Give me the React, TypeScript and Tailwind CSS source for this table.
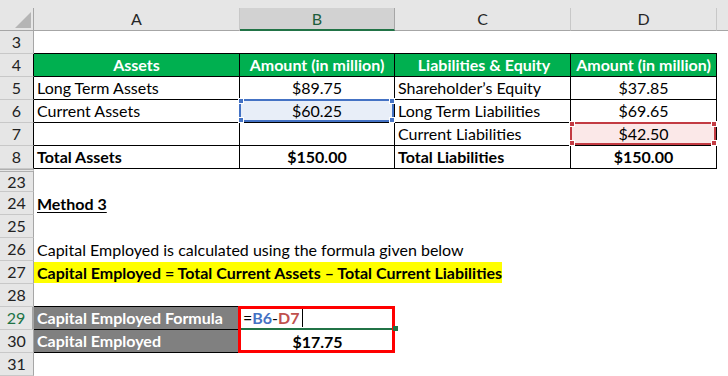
import type { ReactNode } from "react";

const font = { fontFamily: "Lato, 'Open Sans', sans-serif" };

type RowProps = {
  num: string;
  a?: ReactNode;
  b?: ReactNode;
  c?: ReactNode;
  d?: ReactNode;
  aCls?: string;
  bCls?: string;
  cCls?: string;
  dCls?: string;
  headCls?: string;
};

function Row({ num, a, b, c, d, aCls = "pl-[3px]", bCls = "", cCls = "", dCls = "", headCls = "" }: RowProps) {
  return (
    <div className="flex h-[23px]">
      <div
        className={`flex w-[34px] shrink-0 items-center justify-center border-b border-r border-b-[#c8c8c8] border-r-[#a6a6a6] bg-[#e6e6e6] text-[#222] ${headCls}`}
      >
        {num}
      </div>
      <div className={`relative flex w-[206px] shrink-0 items-center whitespace-nowrap ${aCls}`}>{a}</div>
      <div className={`relative flex w-[155px] shrink-0 items-center justify-center whitespace-nowrap ${bCls}`}>{b}</div>
      <div className={`relative flex w-[176px] shrink-0 items-center whitespace-nowrap pl-[3px] ${cCls}`}>{c}</div>
      <div className={`relative flex w-[146px] shrink-0 items-center justify-center whitespace-nowrap ${dCls}`}>{d}</div>
      <div className="flex-1" />
    </div>
  );
}

function Handles({ color }: { color: string }) {
  return (
    <>
      <span className={`absolute -left-[3px] -top-[3px] h-[6px] w-[6px] border border-white ${color}`} />
      <span className={`absolute -right-[3px] -top-[3px] h-[6px] w-[6px] border border-white ${color}`} />
      <span className={`absolute -bottom-[3px] -left-[3px] h-[6px] w-[6px] border border-white ${color}`} />
      <span className={`absolute -bottom-[3px] -right-[3px] h-[6px] w-[6px] border border-white ${color}`} />
    </>
  );
}

const tb = "border-b border-r border-black";
const green = "bg-[#00b050] text-white font-bold";

export default function App() {
  return (
    <div className="h-[376px] w-[728px] overflow-hidden bg-white text-[16px] leading-none text-black" style={font}>
      {/* column headers */}
      <div className="flex h-[31px] bg-[#e6e6e6] pt-[8px]">
        <div className="relative w-[34px] shrink-0 border-b border-r border-[#a6a6a6]">
          <svg className="absolute left-[15px] top-[4px]" width="17" height="16" viewBox="0 0 17 16">
            <polygon points="16,0 16,16 0,16" fill="#b5b5b5" />
          </svg>
        </div>
        <div className="flex w-[206px] shrink-0 items-center justify-center border-b border-r border-b-[#a6a6a6] border-r-[#c8c8c8] text-[#262626]">
          A
        </div>
        <div className="flex w-[155px] shrink-0 items-center justify-center border-b-2 border-r border-b-[#217346] border-r-[#a6a6a6] bg-[#d2d2d2] text-[#1e5e3c]">
          B
        </div>
        <div className="flex w-[176px] shrink-0 items-center justify-center border-b border-r border-b-[#a6a6a6] border-r-[#c8c8c8] text-[#262626]">
          C
        </div>
        <div className="flex w-[146px] shrink-0 items-center justify-center border-b border-r border-b-[#a6a6a6] border-r-[#c8c8c8] text-[#262626]">
          D
        </div>
        <div className="flex-1 border-b border-[#a6a6a6]" />
      </div>

      <Row num="3" aCls="border-b border-black" bCls="border-b border-black" cCls="border-b border-black" dCls="border-b border-black" />
      <Row
        num="4"
        headCls="border-r-black"
        a="Assets"
        b="Amount (in million)"
        c="Liabilities & Equity"
        d="Amount (in million)"
        aCls={`${tb} ${green} justify-center`}
        bCls={`${tb} ${green}`}
        cCls={`${tb} ${green} justify-center pl-0`}
        dCls={`${tb} ${green}`}
      />
      <Row
        num="5"
        headCls="border-r-black"
        a="Long Term Assets"
        b="$89.75"
        c="Shareholder’s Equity"
        d="$37.85"
        aCls={`${tb} pl-[3px]`}
        bCls={tb}
        cCls={tb}
        dCls={tb}
      />
      <Row
        num="6"
        headCls="border-r-black"
        a="Current Assets"
        b={
          <>
            <span className="absolute -left-[1px] -top-[1px] bottom-0 right-0 z-10 border-2 border-[#4472c4] bg-[#e8eef8]">
              <Handles color="bg-[#4472c4]" />
            </span>
            <span className="relative z-20">$60.25</span>
          </>
        }
        c="Long Term Liabilities"
        d="$69.65"
        aCls={`${tb} pl-[3px]`}
        bCls={tb}
        cCls={tb}
        dCls={tb}
      />
      <Row
        num="7"
        headCls="border-r-black"
        c="Current Liabilities"
        d={
          <>
            <span className="absolute -left-[1px] -top-[1px] bottom-0 right-0 z-10 border-2 border-[#c33b43] bg-[#fbe8e8]">
              <Handles color="bg-[#c33b43]" />
            </span>
            <span className="relative z-20">$42.50</span>
          </>
        }
        aCls={tb}
        bCls={tb}
        cCls={tb}
        dCls={tb}
      />
      <Row
        num="8"
        headCls="border-r-black"
        a="Total Assets"
        b="$150.00"
        c="Total Liabilities"
        d="$150.00"
        aCls={`${tb} pl-[3px] font-bold`}
        bCls={`${tb} font-bold`}
        cCls={`${tb} font-bold`}
        dCls={`${tb} font-bold`}
      />
      <Row num="23" headCls="border-t-[3px] border-double border-t-[#b0b0b0]" />
      <Row num="24" a={<span className="font-bold underline underline-offset-2">Method 3</span>} />
      <Row num="25" />
      <Row num="26" a="Capital Employed is calculated using the formula given below" />
      <Row
        num="27"
        aCls=""
        a={
          <span className="flex h-[21px] w-[468px] items-center bg-[#ffff00] pl-[3px] font-bold">
            Capital Employed = Total Current Assets – Total Current Liabilities
          </span>
        }
      />
      <Row num="28" aCls="border-b border-black" />
      <Row
        num="29"
        headCls="border-r-2 border-r-[#217346] bg-[#dadada] text-[#217346]"
        a="Capital Employed Formula"
        aCls="border-b border-r border-black bg-[#808080] pl-[3px] font-bold text-white"
        bCls="justify-start pl-[3px] border-b-2 border-b-[#217346]"
        b={
          <>
            <span className="absolute -left-[2px] -top-[1px] z-10 h-[47px] w-[157px] border-[3px] border-[#ff0000]" />
            <span className="absolute -bottom-[3px] -right-[3px] z-20 h-[5px] w-[5px] bg-[#217346]" />
            <span>=</span>
            <span className="font-bold text-[#4472c4]">B6</span>
            <span>-</span>
            <span className="font-bold text-[#c0504d]">D7</span>
            <span className="ml-[2px] inline-block h-[18px] w-px bg-black" />
          </>
        }
      />
      <Row
        num="30"
        a="Capital Employed"
        aCls="border-b border-r border-black bg-[#808080] pl-[3px] font-bold text-white"
        b="$17.75"
        bCls="font-bold"
      />
      <Row num="31" />
    </div>
  );
}
